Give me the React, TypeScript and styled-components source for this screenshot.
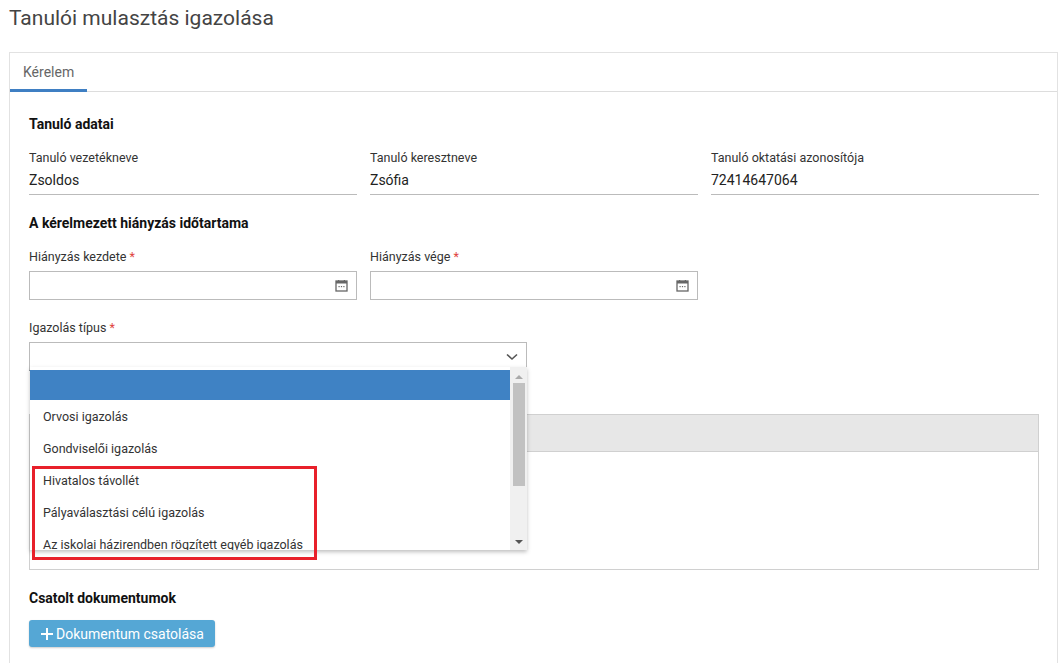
import styled, { createGlobalStyle } from "styled-components"

const Global = createGlobalStyle`
body { margin:0; background:#fff; font-family: Roboto, "Liberation Sans", sans-serif; color:#222; }
`

const Page = styled.div`
padding: 4px 3px 0 9px;
height: 663px;
overflow: hidden;
box-sizing: border-box;
`
const Title = styled.h1`
font-size: 21px;
font-weight: 400;
color: #444;
margin: 0 0 20px 0;
line-height: 28px;
`
const Card = styled.div`
border: 1px solid #e2e2e2;
border-bottom: none;
height: 700px;
`
const Tabs = styled.div`
display: flex;
border-bottom: 1px solid #ddd;
`
const Tab = styled.div`
padding: 11px 13px 9px 13px;
font-size: 14px;
color: #666;
border-bottom: 3px solid #3f7fc3;
margin-bottom: -1px;
`
const Body = styled.div`
padding: 24px 18px 0 19px;
`
const Section = styled.div`
font-size: 14px;
font-weight: 700;
color: #111;
margin-bottom: 18px;
`
const Row = styled.div`
display: grid;
grid-template-columns: repeat(3, 1fr);
column-gap: 13px;
margin-bottom: 20px;
`
const Label = styled.div`
font-size: 12.5px;
color: #333;
margin-bottom: 7px;
`
const Star = styled.span`
color: #e0453f;
`
const Value = styled.div`
font-size: 14px;
color: #222;
padding-bottom: 6px;
border-bottom: 1px solid #bbb;
`
const Input = styled.div`
height: 27px;
border: 1px solid #bbb;
display: flex;
align-items: center;
justify-content: flex-end;
padding-right: 8px;
`
const Field = styled.div`
position: relative;
width: 498px;
margin-top: 10px;
`
const Select = styled(Input)`
border-bottom: 1px solid #5c6e7d;
`
const Dropdown = styled.div`
position: absolute;
top: 47px;
left: 1px;
width: 497px;
height: 183px;
background: #fff;
box-shadow: 0 2px 4px rgba(0,0,0,0.25);
display: flex;
z-index: 5;
overflow: hidden;
`
const Options = styled.div`
flex: 1;
padding-top: 3px;
`
const Option = styled.div<{ $active?: boolean }>`
height: ${p => p.$active ? "30px" : "32px"};
display: flex;
align-items: center;
padding-left: 13px;
font-size: 12.5px;
color: #333;
background: ${p => p.$active ? "#3f82c4" : "transparent"};
`
const Scroll = styled.div`
width: 17px;
background: #f0f0f0;
display: flex;
flex-direction: column;
align-items: center;
padding: 8px 0 6px;
box-sizing: border-box;
`
const Thumb = styled.div`
width: 12px;
height: 103px;
background: #c1c1c1;
margin-top: 4px;
`
const Arrow = styled.div<{ $down?: boolean }>`
width: 0; height: 0;
border-left: 4px solid transparent;
border-right: 4px solid transparent;
${p => p.$down ? "border-top: 4px solid #555; margin-top:auto;" : "border-bottom: 4px solid #aaa;"}
`
const Panel = styled.div`
margin-top: 43px;
border: 1px solid #d0d0d0;
height: 154px;
`
const PanelHead = styled.div`
height: 36px;
background: #e7e7e7;
border-bottom: 1px solid #d0d0d0;
`
const Attach = styled(Section)`
margin: 20px 0 14px;
`
const Button = styled.button`
background: #55a7d5;
color: #fff;
border: none;
border-radius: 3px;
height: 27px;
padding: 0 11px;
font-family: inherit;
font-size: 14px;
display: flex;
align-items: center;
gap: 2px;
box-shadow: 0 1px 2px rgba(0,0,0,0.2);
`
const Highlight = styled.div`
position: absolute;
left: 3px;
top: 146px;
width: 279px;
height: 88px;
border: 3px solid #e8202a;
z-index: 6;
`

const Cal = () => (
  <svg width="13" height="13" viewBox="0 0 13 13">
    <rect x="1" y="2" width="11" height="10" fill="none" stroke="#666" strokeWidth="1.3" />
    <rect x="1" y="2" width="11" height="2.5" fill="#666" />
    <rect x="3" y="1" width="1.2" height="2" fill="#666" />
    <rect x="8.8" y="1" width="1.2" height="2" fill="#666" />
    <rect x="3.5" y="7" width="1.2" height="1.2" fill="#666" />
    <rect x="5.9" y="7" width="1.2" height="1.2" fill="#666" />
    <rect x="8.3" y="7" width="1.2" height="1.2" fill="#666" />
  </svg>
)

const options = ["Orvosi igazolás", "Gondviselői igazolás", "Hivatalos távollét", "Pályaválasztási célú igazolás", "Az iskolai házirendben rögzített egyéb igazolás"]

export default function App() {
  return (
    <Page>
      <Global />
      <Title>Tanulói mulasztás igazolása</Title>
      <Card>
        <Tabs><Tab>Kérelem</Tab></Tabs>
        <Body>
          <Section>Tanuló adatai</Section>
          <Row>
            <div><Label>Tanuló vezetékneve</Label><Value>Zsoldos</Value></div>
            <div><Label>Tanuló keresztneve</Label><Value>Zsófia</Value></div>
            <div><Label>Tanuló oktatási azonosítója</Label><Value>72414647064</Value></div>
          </Row>
          <Section>A kérelmezett hiányzás időtartama</Section>
          <Row>
            <div><Label>Hiányzás kezdete <Star>*</Star></Label><Input><Cal /></Input></div>
            <div><Label>Hiányzás vége <Star>*</Star></Label><Input><Cal /></Input></div>
          </Row>
          <Field>
            <Label>Igazolás típus <Star>*</Star></Label>
            <Select>
              <svg width="12" height="8" viewBox="0 0 12 8"><path d="M1 1.5 L6 6 L11 1.5" fill="none" stroke="#555" strokeWidth="1.6" /></svg>
            </Select>
            <Dropdown>
              <Options>
                <Option $active />
                {options.map(o => <Option key={o}>{o}</Option>)}
              </Options>
              <Scroll><Arrow /><Thumb /><Arrow $down /></Scroll>
            </Dropdown>
            <Highlight />
          </Field>
          <Panel><PanelHead /></Panel>
          <Attach>Csatolt dokumentumok</Attach>
          <Button>
            <svg width="14" height="14" viewBox="0 0 14 14"><path d="M7 1 V13 M1 7 H13" stroke="#fff" strokeWidth="2" /></svg>
            Dokumentum csatolása
          </Button>
        </Body>
      </Card>
    </Page>
  )
}
